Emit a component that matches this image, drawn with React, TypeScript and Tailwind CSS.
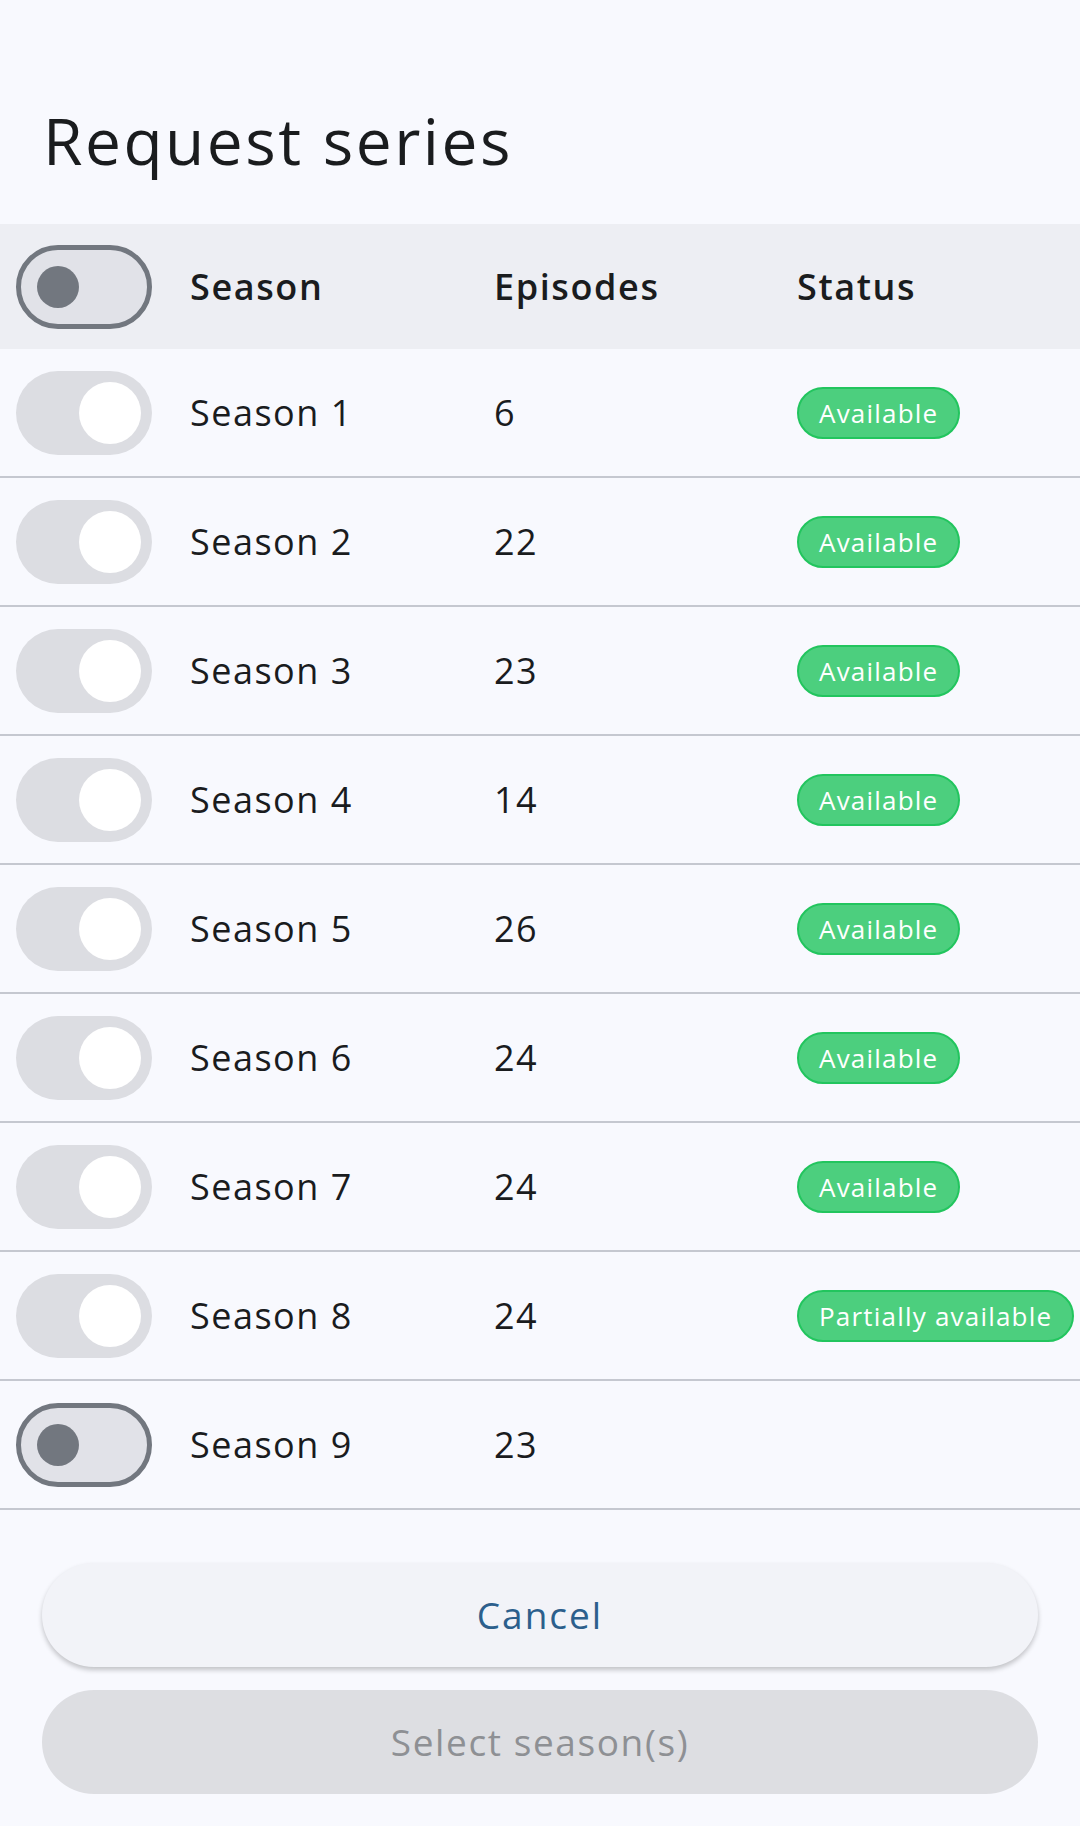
import React from "react"

type Season = {
  name: string
  episodes: number
  status?: "Available" | "Partially available"
  locked: boolean
}

const seasons: Season[] = [
  { name: "Season 1", episodes: 6, status: "Available", locked: true },
  { name: "Season 2", episodes: 22, status: "Available", locked: true },
  { name: "Season 3", episodes: 23, status: "Available", locked: true },
  { name: "Season 4", episodes: 14, status: "Available", locked: true },
  { name: "Season 5", episodes: 26, status: "Available", locked: true },
  { name: "Season 6", episodes: 24, status: "Available", locked: true },
  { name: "Season 7", episodes: 24, status: "Available", locked: true },
  { name: "Season 8", episodes: 24, status: "Partially available", locked: true },
  { name: "Season 9", episodes: 23, locked: false },
]

function Toggle({ on }: { on: boolean }) {
  if (on) {
    // checked but disabled
    return (
      <div className="flex h-[84px] w-[136px] items-center justify-end rounded-full bg-[#dcdde2] pr-[11px]">
        <div className="h-[62px] w-[62px] rounded-full bg-white" />
      </div>
    )
  }
  return (
    <div className="flex h-[84px] w-[136px] items-center rounded-full border-[5px] border-[#72777f] bg-[#e1e2e8] pl-4">
      <div className="h-[42px] w-[42px] rounded-full bg-[#72777f]" />
    </div>
  )
}

function Badge({ label }: { label: string }) {
  return (
    <span className="inline-flex h-[52px] items-center rounded-full border-2 border-[#22c55e] bg-[#4ccf7e] px-[20px] text-[26px] leading-none tracking-[1.2px] text-white">
      {label}
    </span>
  )
}

export default function App() {
  return (
    <div className="flex min-h-screen w-full flex-col bg-[#f8f9fe] font-['Open_Sans',sans-serif] text-[#1a1c1e]">
      <h1 className="px-[43px] pt-[101px] pb-[43px] text-[64px] leading-[80px] font-normal tracking-[2.5px]">
        Request series
      </h1>

      <div className="grid h-[125px] grid-cols-[190px_304px_303px_1fr] items-center bg-[#edeef3] text-[36px] font-semibold tracking-[1.6px]">
        <div className="pl-4">
          <Toggle on={false} />
        </div>
        <div>Season</div>
        <div>Episodes</div>
        <div>Status</div>
      </div>

      {seasons.map((s) => (
        <div
          key={s.name}
          className="grid h-[129px] grid-cols-[190px_304px_303px_1fr] items-center border-b-2 border-[#c5c8d0] text-[36px] tracking-[1.5px]"
        >
          <div className="pl-4">
            <Toggle on={s.locked} />
          </div>
          <div>{s.name}</div>
          <div>{s.episodes}</div>
          <div className="flex items-center whitespace-nowrap">
            {s.status && <Badge label={s.status} />}
          </div>
        </div>
      ))}

      <div className="flex flex-col gap-[23px] px-[42px] pt-[53px] pb-[31px]">
        <button className="h-[104px] rounded-full bg-[#f2f3f8] text-[37px] tracking-[2px] text-[#2c5f8c] shadow-[0_3px_5px_rgba(0,0,0,0.22)]">
          Cancel
        </button>
        <button className="h-[104px] rounded-full bg-[#dddee2] text-[37px] tracking-[1.6px] text-[#8e9094]">
          Select season(s)
        </button>
      </div>
    </div>
  )
}
